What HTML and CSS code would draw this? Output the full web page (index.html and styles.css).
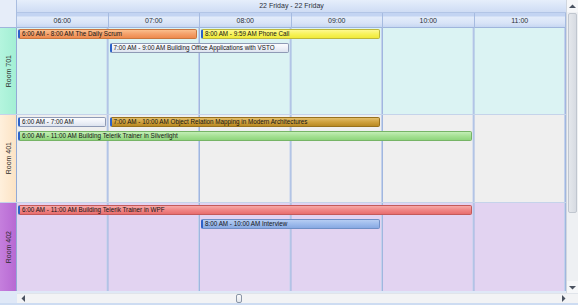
FILE: index.html
```html
<!DOCTYPE html>
<html lang="en-US">
<head>
  <meta charset="UTF-8" />
  <title>Room Scheduler</title>
  <link rel="stylesheet" href="styles.css">
</head>
<body>
  <div class="scheduler">
    <div class="corner"></div>
    <div class="date-head">22 Friday - 22 Friday</div>

    <!-- vertical scrollbar -->
    <div class="vscroll">
      <div class="arrow">
        <svg width="7" height="5" viewBox="0 0 7 5"><polygon points="0,4 3.5,0.5 7,4" fill="#4a5260"/></svg>
      </div>
      <div class="vtrack"><div class="vthumb"></div></div>
      <div class="arrow">
        <svg width="7" height="5" viewBox="0 0 7 5"><polygon points="0,1 3.5,4.5 7,1" fill="#4a5260"/></svg>
      </div>
    </div>

    <div class="corner corner-time"></div>
    <div class="time-head">
      <div class="slot">06:00</div>
      <div class="slot">07:00</div>
      <div class="slot">08:00</div>
      <div class="slot">09:00</div>
      <div class="slot">10:00</div>
      <div class="slot">11:00</div>
    </div>

    <div class="rooms">
      <div class="room room-701">
        <div class="room-label"><span>Room 701</span></div>
        <div class="lane">
          <div class="appt orange" style="grid-column: 1 / 3; grid-row: 1;">6:00 AM - 8:00 AM The Daily Scrum</div>
          <div class="appt yellow" style="grid-column: 3 / 5; grid-row: 1;">8:00 AM - 9:59 AM Phone Call</div>
          <div class="appt plain" style="grid-column: 2 / 4; grid-row: 2;">7:00 AM - 9:00 AM Building Office Applications with VSTO</div>
        </div>
      </div>
      <div class="room room-401">
        <div class="room-label"><span>Room 401</span></div>
        <div class="lane">
          <div class="appt plain" style="grid-column: 1 / 2; grid-row: 1;">6:00 AM - 7:00 AM</div>
          <div class="appt gold" style="grid-column: 2 / 5; grid-row: 1;">7:00 AM - 10:00 AM Object Relation Mapping in Modern Architectures</div>
          <div class="appt green" style="grid-column: 1 / 6; grid-row: 2;">6:00 AM - 11:00 AM Building Telerik Trainer in Silverlight</div>
        </div>
      </div>
      <div class="room room-402">
        <div class="room-label"><span>Room 402</span></div>
        <div class="lane">
          <div class="appt red" style="grid-column: 1 / 6; grid-row: 1;">6:00 AM - 11:00 AM Building Telerik Trainer in WPF</div>
          <div class="appt blue" style="grid-column: 3 / 5; grid-row: 2;">8:00 AM - 10:00 AM Interview</div>
        </div>
      </div>
    </div>

    <!-- horizontal scrollbar -->
    <div class="corner corner-bottom"></div>
    <div class="hscroll">
      <svg width="5" height="7" viewBox="0 0 5 7"><polygon points="4,0 0.5,3.5 4,7" fill="#4a5260"/></svg>
      <div class="htrack"><div class="hthumb"></div></div>
      <svg width="5" height="7" viewBox="0 0 5 7"><polygon points="1,0 4.5,3.5 1,7" fill="#4a5260"/></svg>
    </div>
    <div class="bottom-edge"></div>
  </div>
</body>
</html>
```

FILE: styles.css
```css
*, *::before, *::after { box-sizing: border-box; }
body {
  margin: 0;
  font-family: 'Liberation Sans', Arial, sans-serif;
  background: #fff;
  color: #222;
}
.scheduler {
  width: 578px;
  height: 305px;
  display: grid;
  grid-template-columns: 17px 549px 12px;
  grid-template-rows: 13px 15px 265px 10px 2px;
  background: #dfe8f7;
}

/* headers */
.corner {
  background: #e6edf9;
  border-right: 1px solid #a9bde0;
}
.corner-time {
  border-bottom: 1px solid #9fb5dc;
}
.date-head {
  background: linear-gradient(#e6eefb 0, #dbe6f8 45%, #cfdcf4 100%);
  border-bottom: 1px solid #b2c5e6;
  font-size: 7px;
  line-height: 12px;
  text-align: center;
  color: #2a2f38;
}
.time-head {
  display: grid;
  grid-template-columns: repeat(6, 1fr);
  border-bottom: 1px solid #9fb5dc;
  background: linear-gradient(#c3d4f2 0, #c3d4f2 3px, #e3ecfa 4px, #d9e4f7 10px, #c7d7f2 100%);
}
.slot {
  border-right: 1px solid #a6bbe0;
  font-size: 7px;
  line-height: 15px;
  text-align: center;
  color: #2a2f38;
}

/* rooms */
.rooms {
  grid-column: 1 / 3;
  grid-row: 3;
  display: flex;
  flex-direction: column;
}
.room {
  display: flex;
  height: 88px;
  border-bottom: 1px solid #c5d3ea;
}
.room:first-child { height: 87px; }
.room:last-child { border-bottom: none; }
.room-label {
  width: 17px;
  flex: none;
  border-right: 1px solid #93aad6;
  display: flex;
  align-items: center;
  justify-content: center;
}
.room-label span {
  writing-mode: vertical-rl;
  transform: rotate(180deg);
  font-size: 7px;
  color: #2a2a2a;
  white-space: nowrap;
}
.lane {
  flex: 1;
  display: grid;
  grid-template-columns: repeat(6, 1fr);
  grid-template-rows: 10px 10px;
  row-gap: 4px;
  align-content: start;
  padding-top: 2px;
  background-image: linear-gradient(to right, transparent calc(100% - 2px), #c3d1ec calc(100% - 2px), #c3d1ec calc(100% - 1px), #a0b6df calc(100% - 1px));
  background-size: calc(100% / 6) 100%;
}
.room-701 .room-label { background: linear-gradient(to right, #b4f5de, #a3efd4); }
.room-701 .lane { background-color: #dbf3f3; padding-top: 1px; }
.room-401 .room-label { background: linear-gradient(to right, #fff0dc, #fce3c4); }
.room-401 .lane { background-color: #efefef; }
.room-402 .room-label { background: linear-gradient(to right, #c57fdd, #b769d3); }
.room-402 .lane { background-color: #e2d3f1; }

/* appointments */
.appt {
  margin: 0 3px 0 1px;
  height: 10px;
  border: 1px solid #8e9ab5;
  border-left: 2px solid #2d62c8;
  border-radius: 2px;
  padding-left: 2px;
  font-size: 6.3px;
  line-height: 8px;
  white-space: nowrap;
  overflow: hidden;
  color: #141414;
}
.orange { background: linear-gradient(#fbbf8e, #f4a06a 50%, #ee8a4e); border-color: #c9763f #c9763f #c9763f #2d62c8; }
.yellow { background: linear-gradient(#fdf991, #f7f25a 50%, #f0ea3a); border-color: #bdb83a #bdb83a #bdb83a #2d62c8; }
.plain  { background: linear-gradient(#fbfcfe, #eef1f8 50%, #dde3ef); border-color: #8e9ab5 #8e9ab5 #8e9ab5 #2d62c8; }
.gold   { background: linear-gradient(#e2bd6a, #cfa13d 50%, #b98a22); border-color: #98711c #98711c #98711c #2d62c8; }
.green  { background: linear-gradient(#c3eeb6, #a6e194 50%, #8fd57c); border-color: #76b466 #76b466 #76b466 #2d62c8; }
.red    { background: linear-gradient(#f7a9a9, #f08686 50%, #e86d6d); border-color: #c45a5a #c45a5a #c45a5a #2d62c8; }
.blue   { background: linear-gradient(#b6cdf2, #9dbbec 50%, #88a9e2); border-color: #6f8fc6 #6f8fc6 #6f8fc6 #2d62c8; }

/* scrollbars */
.vscroll {
  grid-column: 3;
  grid-row: 1 / 4;
  display: flex;
  flex-direction: column;
  background: #eef0f3;
  border-left: 1px solid #d0d6df;
}
.arrow {
  height: 12px;
  flex: none;
  display: flex;
  align-items: center;
  justify-content: center;
  background: #f6f7f9;
}
.vtrack {
  flex: 1;
  padding: 1px 1px;
}
.vthumb {
  height: 200px;
  background: linear-gradient(to right, #e4e7ec, #d7dbe2);
  border: 1px solid #c0c6cf;
  border-radius: 2px;
}
.corner-bottom {
  grid-column: 1;
  grid-row: 4;
  background: #dfe8f7;
  border-right: none;
}
.hscroll {
  grid-column: 2 / 4;
  grid-row: 4;
  display: flex;
  align-items: center;
  gap: 2px;
  padding: 0 12px 0 4px;
  background: #f2f3f5;
  border-top: 1px solid #e0e4ea;
}
.htrack {
  flex: 1;
  height: 100%;
  display: flex;
  align-items: center;
  padding-left: 208px;
}
.hthumb {
  width: 6px;
  height: 9px;
  border: 1px solid #8b96a8;
  border-radius: 2px;
  background: linear-gradient(#fafbfc, #e4e7ec);
}
.bottom-edge {
  grid-column: 1 / 4;
  grid-row: 5;
  background: #cddcf2;
}
```
